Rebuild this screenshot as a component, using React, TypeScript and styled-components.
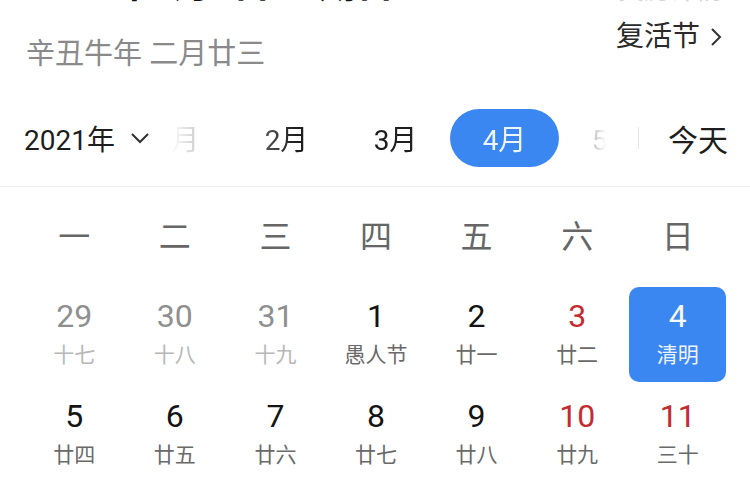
import React from 'react'
import styled, { createGlobalStyle, css } from 'styled-components'

type Day = {
  n: number
  lunar: string
  prev?: boolean
  weekend?: boolean
  selected?: boolean
}

const weekdays = ['一', '二', '三', '四', '五', '六', '日']
const months = ['1月', '2月', '3月', '4月', '5月']

const days: Day[] = [
  { n: 29, lunar: '十七', prev: true },
  { n: 30, lunar: '十八', prev: true },
  { n: 31, lunar: '十九', prev: true },
  { n: 1, lunar: '愚人节' },
  { n: 2, lunar: '廿一' },
  { n: 3, lunar: '廿二', weekend: true },
  { n: 4, lunar: '清明', weekend: true, selected: true },
  { n: 5, lunar: '廿四' },
  { n: 6, lunar: '廿五' },
  { n: 7, lunar: '廿六' },
  { n: 8, lunar: '廿七' },
  { n: 9, lunar: '廿八' },
  { n: 10, lunar: '廿九', weekend: true },
  { n: 11, lunar: '三十', weekend: true },
  { n: 12, lunar: '三月' },
  { n: 13, lunar: '初二' },
  { n: 14, lunar: '初三' },
  { n: 15, lunar: '初四' },
  { n: 16, lunar: '初五' },
  { n: 17, lunar: '初六', weekend: true },
  { n: 18, lunar: '初七', weekend: true },
]

const App: React.FC = () => {
  return (
    <Page>
      <GlobalStyle />
      <Header>
        <HeaderLeft>
          <Title>2021年4月4日 星期日</Title>
          <LunarDate>辛丑牛年 二月廿三</LunarDate>
        </HeaderLeft>
        <HeaderRight>
          <FadedLink>黄历详情</FadedLink>
          <FestivalLink>
            复活节
            <svg width="12" height="20" viewBox="0 0 12 20">
              <path d="M2 2 L10 10 L2 18" fill="none" stroke="#333" strokeWidth="2" />
            </svg>
          </FestivalLink>
        </HeaderRight>
      </Header>

      <MonthBar>
        <YearSelect>
          2021年
          <svg width="20" height="12" viewBox="0 0 20 12">
            <path d="M2 2 L10 10 L18 2" fill="none" stroke="#333" strokeWidth="2" />
          </svg>
        </YearSelect>
        <MonthList>
          <MonthTrack>
            {months.map((m) => (
              <MonthItem key={m}>
                <MonthLabel $active={m === '4月'}>{m}</MonthLabel>
              </MonthItem>
            ))}
          </MonthTrack>
        </MonthList>
        <Divider />
        <TodayButton>今天</TodayButton>
      </MonthBar>

      <Grid>
        {weekdays.map((w) => (
          <Weekday key={w}>{w}</Weekday>
        ))}
        {days.map((d) => (
          <DayCell key={`${d.prev ? 'p' : 'c'}${d.n}`} $selected={d.selected}>
            <DayNumber $prev={d.prev} $weekend={d.weekend} $selected={d.selected}>
              {d.n}
            </DayNumber>
            <DayLunar $prev={d.prev} $selected={d.selected}>
              {d.lunar}
            </DayLunar>
          </DayCell>
        ))}
      </Grid>
    </Page>
  )
}

const GlobalStyle = createGlobalStyle`
  body {
    margin: 0;
    background: #fff;
    font-family: Roboto, "Noto Sans CJK SC", sans-serif;
  }
`

const Page = styled.div`
  width: 750px;
  height: 500px;
  overflow: hidden;
  background: #fff;
`

const Header = styled.div`
  display: flex;
  justify-content: space-between;
  align-items: flex-start;
  height: 82px;
  padding: 0 28px 0 26px;
  overflow: hidden;
`

const HeaderLeft = styled.div`
  display: flex;
  flex-direction: column;
`

const HeaderRight = styled.div`
  display: flex;
  flex-direction: column;
  align-items: flex-end;
`

const Title = styled.div`
  margin-top: -38px;
  font-size: 38px;
  line-height: 44px;
  font-weight: 700;
  color: #111;
  white-space: nowrap;
`

const LunarDate = styled.div`
  margin-top: 30px;
  font-size: 29px;
  line-height: 36px;
  color: #8a8a8a;
`

const FadedLink = styled.div`
  margin-top: -25px;
  font-size: 26px;
  line-height: 30px;
  color: #d4d4d4;
`

const FestivalLink = styled.div`
  display: flex;
  align-items: center;
  gap: 10px;
  margin-top: 14px;
  font-size: 28px;
  line-height: 36px;
  color: #2a2a2a;
`

const MonthBar = styled.div`
  display: flex;
  align-items: center;
  height: 96px;
  padding: 8px 22px 0 24px;
  border-bottom: 1px solid #ececec;
  font-size: 28px;
  color: #1e1e1e;
`

const YearSelect = styled.div`
  flex: 0 0 136px;
  display: flex;
  align-items: center;
  gap: 15px;
  white-space: nowrap;
`

const fade = `linear-gradient(
  to right,
  transparent 0,
  transparent 10px,
  #000 135px,
  #000 398px,
  transparent 446px
)`

const MonthList = styled.div`
  flex: 0 0 465px;
  height: 60px;
  overflow: hidden;
  -webkit-mask-image: ${fade};
  mask-image: ${fade};
`

const MonthTrack = styled.div`
  display: flex;
  height: 100%;
  margin-left: -37px;
`

const MonthItem = styled.div`
  flex: 0 0 108px;
  display: flex;
  align-items: center;
  justify-content: center;
`

const MonthLabel = styled.div<{ $active?: boolean }>`
  display: flex;
  align-items: center;
  justify-content: center;
  flex: 0 0 109px;
  height: 58px;
  border-radius: 29px;
  ${(p) =>
    p.$active &&
    css`
      background: #3a87f2;
      color: #eef4ff;
    `}
`

const Divider = styled.div`
  flex: 0 0 1px;
  height: 22px;
  margin: 0 29px 0 13px;
  background: #e6e6e6;
`

const TodayButton = styled.div`
  font-size: 30px;
  white-space: nowrap;
`

const Grid = styled.div`
  display: grid;
  grid-template-columns: repeat(7, 1fr);
  grid-auto-rows: 95px;
  row-gap: 5px;
  padding: 0 22px 0 24px;
`

const Weekday = styled.div`
  display: flex;
  align-items: center;
  justify-content: center;
  height: 94px;
  font-size: 32px;
  color: #666;
`

const DayCell = styled.div<{ $selected?: boolean }>`
  display: flex;
  flex-direction: column;
  align-items: center;
  margin: 0 2px;
  padding-top: 11px;
  border-radius: 10px;
  background: ${(p) => (p.$selected ? '#3a87f2' : 'transparent')};
`

const DayNumber = styled.div<{ $prev?: boolean; $weekend?: boolean; $selected?: boolean }>`
  font-size: 32px;
  line-height: 36px;
  color: ${(p) =>
    p.$selected ? '#f4f8ff' : p.$prev ? '#8f8f8f' : p.$weekend ? '#c62a2f' : '#141414'};
`

const DayLunar = styled.div<{ $prev?: boolean; $selected?: boolean }>`
  margin-top: 8px;
  font-size: 21px;
  line-height: 26px;
  color: ${(p) => (p.$selected ? '#eef4ff' : p.$prev ? '#b8b8b8' : '#6a6a6a')};
`

export default App
